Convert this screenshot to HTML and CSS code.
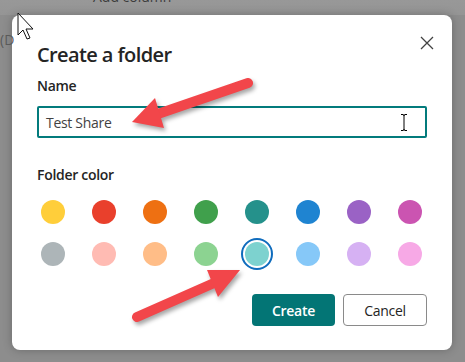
FILE: index.html
```html
<!DOCTYPE html>
<html lang="en">
<head>
    <title>Create a folder</title>
    <meta charset="UTF-8" />
    <link rel="stylesheet" href="styles.css">
</head>
<body>
    <div class="backdrop-text top-col">Add column</div>
    <div class="backdrop-text left-col">(D</div>

    <div class="dialog">
        <div class="dialog-header">
            <h2 class="dialog-title">Create a folder</h2>
            <button class="close-btn" title="Close">
                <svg width="14" height="14" viewBox="0 0 14 14"><path d="M1 1 L13 13 M13 1 L1 13" stroke="#424242" stroke-width="1.3" fill="none"/></svg>
            </button>
        </div>

        <label class="field-label">Name</label>
        <div class="text-input">
            <span class="input-value">Test Share</span>
            <svg class="ibeam" width="8" height="17" viewBox="0 0 8 17"><path d="M1 0.5 H3 Q4 0.5 4 2 V15 Q4 16.5 3 16.5 H1 M7 0.5 H5 Q4 0.5 4 2 M4 15 Q4 16.5 5 16.5 H7" stroke="#000" stroke-width="1" fill="none"/></svg>
        </div>

        <div class="field-label color-label">Folder color</div>
        <div class="swatches">
            <div class="swatch"><span style="background:#ffce3a"></span></div>
            <div class="swatch"><span style="background:#e9402c"></span></div>
            <div class="swatch"><span style="background:#ee7012"></span></div>
            <div class="swatch"><span style="background:#40a04c"></span></div>
            <div class="swatch"><span style="background:#25918b"></span></div>
            <div class="swatch"><span style="background:#1f84d1"></span></div>
            <div class="swatch"><span style="background:#9a62c5"></span></div>
            <div class="swatch"><span style="background:#cb54b1"></span></div>
            <div class="swatch"><span style="background:#adb5b8"></span></div>
            <div class="swatch"><span style="background:#ffbbb3"></span></div>
            <div class="swatch"><span style="background:#ffbd87"></span></div>
            <div class="swatch"><span style="background:#8cd391"></span></div>
            <div class="swatch selected"><span style="background:#7dd2cf"></span></div>
            <div class="swatch"><span style="background:#86c8f8"></span></div>
            <div class="swatch"><span style="background:#d6b1f3"></span></div>
            <div class="swatch"><span style="background:#f7a9e6"></span></div>
        </div>

        <div class="actions">
            <button class="btn btn-primary">Create</button>
            <button class="btn btn-default">Cancel</button>
        </div>
    </div>

    <!-- annotations drawn over the screenshot -->
    <svg class="annotations" width="465" height="362" viewBox="0 0 465 362">
        <g class="arrow">
            <line x1="248" y1="83" x2="152" y2="116" stroke="#f2464a" stroke-width="10" stroke-linecap="round"/>
            <polygon points="132,122 155,98 164,128" fill="#f2464a"/>
        </g>
        <g class="arrow">
            <line x1="137" y1="317" x2="214" y2="283" stroke="#f2464a" stroke-width="10" stroke-linecap="round"/>
            <polygon points="240,270 207,270 218,297" fill="#f2464a"/>
        </g>
        <path class="pointer" d="M18 13 V35 L23 30 L27 39 L30 38 L26 29 H33 Z" fill="#fff" stroke="#111" stroke-width="1"/>
    </svg>
</body>
</html>
```

FILE: styles.css
```css
body {
    font-family: 'Open Sans', sans-serif;
    background: linear-gradient(#989898 0, #959595 15px, #8d8d8d 15px);
    margin: 0;
    width: 465px;
    height: 362px;
    overflow: hidden;
    position: relative;
    color: #242424;
}

.backdrop-text {
    position: absolute;
    font-size: 14px;
    color: #3c3c3c;
}

.top-col {
    left: 93px;
    top: -13px;
}

.left-col {
    left: 0;
    top: 30px;
    color: #5a5a5a;
}

.dialog {
    box-sizing: border-box;
    width: 440px;
    height: 335px;
    margin: 15px 0 0 12px;
    padding: 26px 25px 24px 25px;
    background: white;
    border-radius: 8px;
    box-shadow: 0 0 10px rgba(0, 0, 0, 0.25);
    display: flex;
    flex-direction: column;
}

.dialog-header {
    display: flex;
    justify-content: space-between;
    align-items: flex-start;
}

.dialog-title {
    margin: 0;
    font-size: 20px;
    line-height: 28px;
    font-weight: 600;
    letter-spacing: -0.6px;
}

.close-btn {
    background: none;
    border: none;
    padding: 0;
    margin: -5px -7px 0 0;
    width: 14px;
    height: 14px;
    display: flex;
}

.field-label {
    display: block;
    font-size: 14px;
    line-height: 20px;
    font-weight: 600;
    margin-top: 7px;
    letter-spacing: -0.3px;
}

.text-input {
    box-sizing: border-box;
    height: 32px;
    margin-top: 10px;
    border: 2px solid #037b7c;
    border-radius: 2px;
    padding: 0 7px;
    display: flex;
    align-items: center;
    justify-content: space-between;
}

.input-value {
    font-size: 14px;
    color: #424242;
    letter-spacing: -0.3px;
    margin-top: 1px;
}

.ibeam {
    margin-right: 10px;
    margin-top: 1px;
}

.color-label {
    margin-top: 27px;
}

.swatches {
    display: grid;
    grid-template-columns: repeat(8, 32px);
    column-gap: 19px;
    row-gap: 10px;
    margin-top: 11px;
}

.swatch {
    box-sizing: border-box;
    width: 32px;
    height: 32px;
    border-radius: 50%;
    display: flex;
    align-items: center;
    justify-content: center;
}

.swatch span {
    width: 24px;
    height: 24px;
    border-radius: 50%;
}

.swatch.selected {
    border: 2px solid #0f6cbd;
}

.actions {
    display: flex;
    justify-content: flex-end;
    gap: 8px;
    margin-top: auto;
}

.btn {
    font-family: 'Open Sans', sans-serif;
    height: 32px;
    border-radius: 4px;
    font-size: 14px;
    padding: 0;
    letter-spacing: -0.3px;
}

.btn-primary {
    width: 83px;
    background: #037575;
    border: none;
    color: white;
    font-weight: 600;
}

.btn-default {
    width: 84px;
    background: white;
    border: 1px solid #8a8a8a;
    color: #242424;
}

.annotations {
    position: absolute;
    left: 0;
    top: 0;
    pointer-events: none;
}

.arrow {
    filter: drop-shadow(2px 3px 2px rgba(0, 0, 0, 0.35));
}
```
